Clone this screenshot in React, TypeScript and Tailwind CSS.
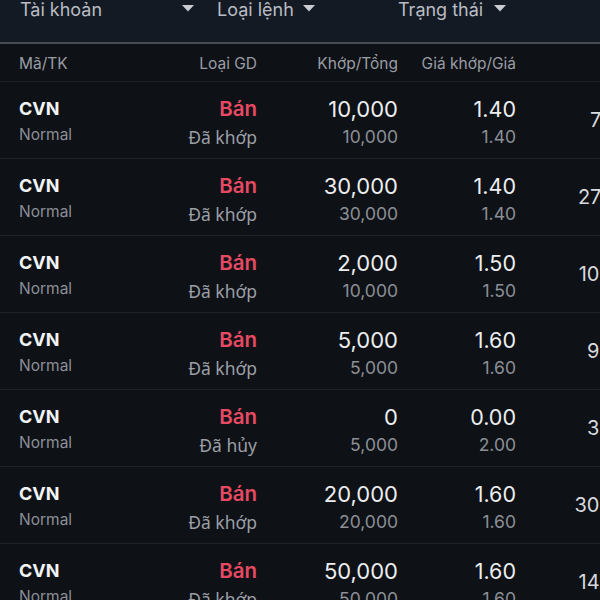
const orders = [
  { qty: '10,000', total: '10,000', price: '1.40', orderPrice: '1.40', status: 'Đã khớp', value: '7,000' },
  { qty: '30,000', total: '30,000', price: '1.40', orderPrice: '1.40', status: 'Đã khớp', value: '27,000' },
  { qty: '2,000', total: '10,000', price: '1.50', orderPrice: '1.50', status: 'Đã khớp', value: '10,000' },
  { qty: '5,000', total: '5,000', price: '1.60', orderPrice: '1.60', status: 'Đã khớp', value: '9,000' },
  { qty: '0', total: '5,000', price: '0.00', orderPrice: '2.00', status: 'Đã hủy', value: '3,000' },
  { qty: '20,000', total: '20,000', price: '1.60', orderPrice: '1.60', status: 'Đã khớp', value: '30,000' },
  { qty: '50,000', total: '50,000', price: '1.60', orderPrice: '1.60', status: 'Đã khớp', value: '14,000' },
]

function Caret() {
  return (
    <svg width="12" height="7" viewBox="0 0 12 7">
      <path d="M0 0h12L6 6.5z" fill="#c9ccd2" />
    </svg>
  )
}

export default function App() {
  return (
    <div
      className="w-[600px] h-[600px] overflow-hidden bg-[#0e1116] text-[#ecedef]"
      style={{ fontFamily: 'Inter, "Noto Sans", sans-serif' }}
    >
      {/* Filter bar */}
      <div className="h-[42px] bg-[#141a24] flex items-start text-[18px] leading-[20px] text-[#b9bcc3] pl-[20px]">
        <span className="w-[162px] shrink-0">Tài khoản</span>
        <div className="w-[35px] shrink-0 pt-[5px]"><Caret /></div>
        <span className="w-[86px] shrink-0">Loại lệnh</span>
        <div className="w-[95px] shrink-0 pt-[5px]"><Caret /></div>
        <span className="w-[96px] shrink-0">Trạng thái</span>
        <div className="pt-[5px]"><Caret /></div>
      </div>
      <div className="h-[2px] bg-[#474c54]" />

      {/* Column header */}
      <div className="h-[38px] flex items-center pl-[19px] pt-[3px] text-[15.5px] text-[#9a9da4] border-b border-[#1d2026]">
        <div className="w-[100px] shrink-0">Mã/TK</div>
        <div className="w-[138px] shrink-0 text-right">Loại GD</div>
        <div className="w-[141px] shrink-0 text-right">Khớp/Tổng</div>
        <div className="w-[118px] shrink-0 text-right">Giá khớp/Giá</div>
      </div>

      {/* Rows */}
      {orders.map((o, i) => (
        <div key={i} className="h-[77px] flex items-start pl-[19px] pt-[15px] border-b border-[#1f2228]">
          <div className="w-[100px] shrink-0 flex flex-col">
            <span className="text-[18px] font-bold leading-[24px] text-[#f2f3f5]">CVN</span>
            <span className="mt-[2px] text-[15.5px] leading-[24px] text-[#8c8f96]">Normal</span>
          </div>
          <div className="w-[138px] shrink-0 flex flex-col items-end">
            <span className="text-[20.5px] font-semibold leading-[24px] text-[#e54a62]">Bán</span>
            <span
              className="mt-[4px] text-[17.5px] leading-[24px] text-[#9c9fa6]"
              style={{ fontFamily: '"Noto Sans", sans-serif' }}
            >
              {o.status}
            </span>
          </div>
          <div className="w-[141px] shrink-0 flex flex-col items-end">
            <span className="text-[22px] leading-[24px]">{o.qty}</span>
            <span className="mt-[4px] text-[17.5px] leading-[24px] text-[#8c8f96]">{o.total}</span>
          </div>
          <div className="w-[118px] shrink-0 flex flex-col items-end">
            <span className="text-[21.5px] leading-[24px]">{o.price}</span>
            <span className="mt-[4px] text-[17.5px] leading-[24px] text-[#8c8f96]">{o.orderPrice}</span>
          </div>
          <div className="w-[126px] shrink-0 mt-[11px] text-right text-[20px] leading-[24px] text-[#d9dade] whitespace-nowrap">
            {o.value}
          </div>
        </div>
      ))}
    </div>
  )
}
